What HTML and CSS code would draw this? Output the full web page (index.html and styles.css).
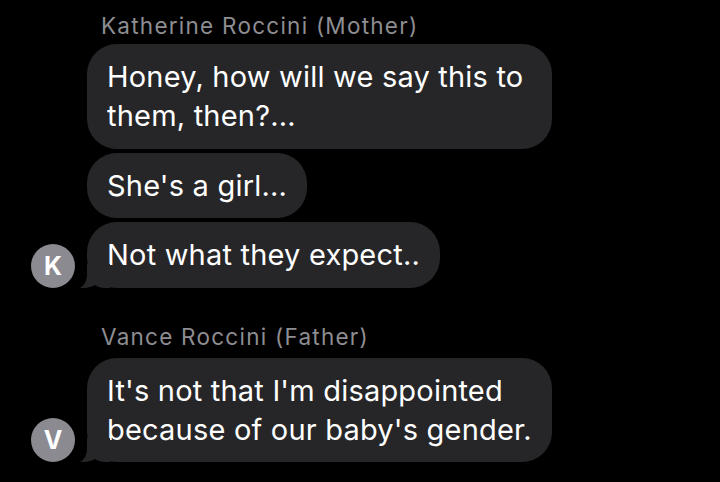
FILE: index.html
```html
<!DOCTYPE html>
<html>
<head>
<meta charset="utf-8">
<link rel="stylesheet" href="styles.css">
</head>
<body>
<main class="chat">
  <section class="group first">
    <div class="sender">Katherine Roccini (Mother)</div>
    <div class="row">
      <div class="avatar-slot"></div>
      <div class="bubble full">Honey, how will we say this to<br>them, then?...</div>
    </div>
    <div class="row">
      <div class="avatar-slot"></div>
      <div class="bubble">She's a girl...</div>
    </div>
    <div class="row">
      <div class="avatar-slot"><div class="avatar">K</div></div>
      <div class="bubble tailed">Not what they expect..
        <svg class="tail" viewBox="0 0 30 24" width="30" height="24"><path d="M7 0 H30 V24 H24 C21 24 18 23 15 21 C11 23.5 5 24.3 0 24 C4.5 21.5 7 17 7 10 Z"/></svg>
      </div>
    </div>
  </section>
  <section class="group second">
    <div class="sender">Vance Roccini (Father)</div>
    <div class="row">
      <div class="avatar-slot"><div class="avatar">V</div></div>
      <div class="bubble full tailed">It's not that I'm disappointed<br>because of our baby's gender.
        <svg class="tail" viewBox="0 0 30 24" width="30" height="24"><path d="M7 0 H30 V24 H24 C21 24 18 23 15 21 C11 23.5 5 24.3 0 24 C4.5 21.5 7 17 7 10 Z"/></svg>
      </div>
    </div>
  </section>
</main>
</body>
</html>
```

FILE: styles.css
```css
html, body {
  margin: 0;
  padding: 0;
  background: #000;
}
body {
  width: 720px;
  height: 482px;
  overflow: hidden;
  font-family: Inter, "Noto Sans", "Liberation Sans", sans-serif;
  -webkit-font-smoothing: antialiased;
}
.chat {
  padding: 13px 0 0 31px;
  display: flex;
  flex-direction: column;
}
.group {
  display: flex;
  flex-direction: column;
  gap: 4px;
}
.second {
  margin-top: 36px;
}
.sender {
  color: #8d8d92;
  font-size: 22.5px;
  line-height: 26px;
  padding-left: 70px;
  margin-bottom: 1px;
  letter-spacing: 1.25px;
  white-space: nowrap;
}
.second .sender {
  margin-bottom: 4px;
}
.row {
  display: flex;
  align-items: flex-end;
  gap: 12px;
}
.avatar-slot {
  width: 44px;
  flex: none;
}
.avatar {
  width: 44px;
  height: 44px;
  border-radius: 50%;
  background: #8a8a90;
  color: #fff;
  font-weight: 700;
  font-size: 25px;
  display: flex;
  align-items: center;
  justify-content: center;
}
.bubble {
  position: relative;
  background: #262628;
  color: #fff;
  font-size: 29px;
  line-height: 39px;
  letter-spacing: 0.2px;
  padding: 13px 20px 13.5px;
  border-radius: 30px;
  box-sizing: border-box;
  max-width: 465px;
  white-space: nowrap;
}
.bubble.full {
  width: 465px;
}
.tail {
  position: absolute;
  left: -7px;
  bottom: 0;
  fill: #262628;
}
```
